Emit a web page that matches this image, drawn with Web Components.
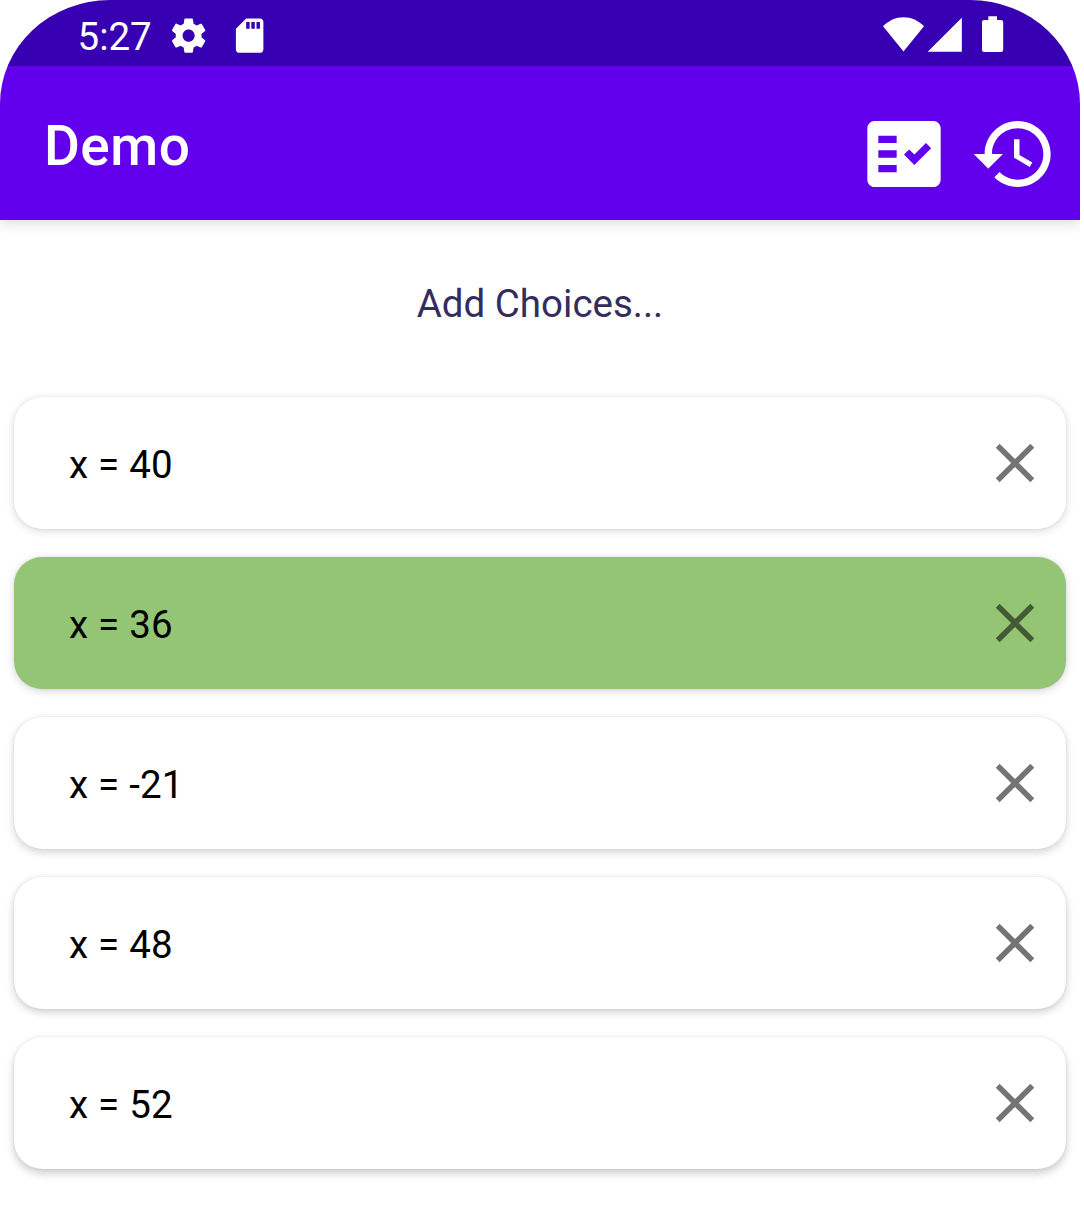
<!DOCTYPE html>
<html lang="en">
<head>
<meta charset="utf-8">
<title>Demo</title>
<style>
body { margin: 0; background: #fff; font-family: Roboto, "Liberation Sans", sans-serif; }
</style>
</head>
<body>
<demo-screen>
  <status-bar slot="top" time="5:27"></status-bar>
  <app-bar slot="top" heading="Demo"></app-bar>
  <choice-list caption="Add Choices...">
    <choice-card style="--drop:2px;--shade:.15">x = 40</choice-card>
    <choice-card selected style="--drop:2px;--shade:.17">x = 36</choice-card>
    <choice-card style="--drop:3px;--shade:.18">x = -21</choice-card>
    <choice-card style="--drop:3px;--shade:.20">x = 48</choice-card>
    <choice-card style="--drop:4px;--shade:.21">x = 52</choice-card>
  </choice-list>
</demo-screen>
<script>
function define(name, render) {
  customElements.define(name, class extends HTMLElement {
    constructor() { super(); this.attachShadow({ mode: "open" }); }
    connectedCallback() { this.shadowRoot.innerHTML = render(this); }
  });
}

define("demo-screen", () => `
<style>
:host { display: block; width: 1080px; height: 1220px; overflow: hidden; }
.top { border-radius: 110px 110px 0 0 / 104px 104px 0 0; box-shadow: 0 3px 14px rgba(0,0,0,.15);
  clip-path: inset(0 0 -30px 0 round 110px 110px 0 0 / 104px 104px 0 0); }
</style>
<div class="top"><slot name="top"></slot></div>
<slot></slot>`);

define("status-bar", el => `
<style>
:host { display: flex; justify-content: space-between; height: 66px; background: #3700b3; color: #fff; }
.group { display: flex; align-items: flex-start; }
.time { font-size: 38.5px; line-height: 45px; padding: 14px 0 0 77.5px; width: 90.3px; }
svg { display: block; fill: #fff; }
.glyph { width: 41.25px; height: 41.25px; margin-top: 14.6px; }
.card { margin-left: 19.8px; }
</style>
<div class="group">
  <span class="time">${el.getAttribute("time")}</span>
  <svg class="glyph" viewBox="0 0 24 24"><path d="M19.43 12.98c.04-.32.07-.64.07-.98s-.03-.66-.07-.98l2.11-1.65c.19-.15.24-.42.12-.64l-2-3.46c-.12-.22-.39-.3-.61-.22l-2.49 1c-.52-.4-1.08-.73-1.69-.98l-.38-2.65C14.46 2.18 14.25 2 14 2h-4c-.25 0-.46.18-.49.42l-.38 2.65c-.61.25-1.17.59-1.69.98l-2.49-1c-.23-.09-.49 0-.61.22l-2 3.46c-.13.22-.07.49.12.64l2.11 1.65c-.04.32-.07.65-.07.98s.03.66.07.98l-2.11 1.65c-.19.15-.24.42-.12.64l2 3.46c.12.22.39.3.61.22l2.49-1c.52.4 1.08.73 1.69.98l.38 2.65c.03.24.24.42.49.42h4c.25 0 .46-.18.49-.42l.38-2.65c.61-.25 1.17-.59 1.69-.98l2.49 1c.23.09.49 0 .61-.22l2-3.46c.12-.22.07-.49-.12-.64l-2.11-1.65zM12 15.5c-1.93 0-3.5-1.57-3.5-3.5s1.57-3.5 3.5-3.5 3.5 1.57 3.5 3.5-1.57 3.5-3.5 3.5z"/></svg>
  <svg class="glyph card" viewBox="0 0 24 24"><path d="M18 2h-8L4.02 8 4 20c0 1.1.9 2 2 2h12c1.1 0 2-.9 2-2V4c0-1.1-.9-2-2-2zm-6 6h-2V4h2v4zm3 0h-2V4h2v4zm3 0h-2V4h2v4z"/></svg>
</div>
<svg width="200" height="66" viewBox="880 0 200 66">
  <path d="M903.5 51.5 883 26.2C888.5 20.5 896 17.2 903.5 17.2S918.5 20.5 924 26.2Z"/>
  <path d="M961.8 17.8V51.8H927.7Z"/>
  <path d="M988.3 16.3h8.7v3.7h4a2.2 2.2 0 0 1 2.2 2.2v27.5a2.2 2.2 0 0 1-2.2 2.2h-16.800a2.2 2.2 0 0 1-2.2-2.2V22.2a2.2 2.2 0 0 1 2.2-2.2h4.1z"/>
</svg>`);

define("app-bar", el => `
<style>
:host { display: flex; justify-content: space-between; align-items: flex-start; height: 154px; box-sizing: border-box;
  padding: 44px 22px 0 44px; background: #6200ee; color: #fff; }
h1 { margin: 3px 0 0; font-size: 55px; line-height: 66px; font-weight: 500; letter-spacing: .45px; }
.actions { display: flex; gap: 22px; }
svg { display: block; width: 88px; height: 88px; fill: #fff; }
</style>
<h1>${el.getAttribute("heading")}</h1>
<div class="actions">
  <svg viewBox="0 0 24 24"><path fill-rule="evenodd" d="M20 3H4c-1.1 0-2 .9-2 2v14c0 1.1.9 2 2 2h16c1.1 0 2-.9 2-2V5c0-1.1-.9-2-2-2zM10 17H5v-2h5v2zm0-4H5v-2h5v2zm0-4H5V7h5v2zm4.82 6L12 12.16l1.41-1.41 1.41 1.42L17.99 9l1.42 1.42L14.82 15z"/></svg>
  <svg viewBox="0 0 24 24"><path d="M13 3c-4.97 0-9 4.03-9 9H1l3.89 3.89.07.14L9 12H6c0-3.87 3.13-7 7-7s7 3.13 7 7-3.13 7-7 7c-1.93 0-3.68-.79-4.94-2.06l-1.42 1.42C8.27 19.99 10.51 21 13 21c4.97 0 9-4.03 9-9s-4.03-9-9-9zm-1 5v5l4.28 2.54.72-1.21-3.5-2.08V8H12z"/></svg>
</div>`);

define("choice-list", el => `
<style>
:host { display: flex; flex-direction: column; padding: 0 14px; }
.caption { margin: 0; padding: 61px 0 71px; text-align: center; font-size: 38.5px; line-height: 45px; color: #332d5e; }
.cards { display: flex; flex-direction: column; gap: 28px; }
</style>
<p class="caption">${el.getAttribute("caption")}</p>
<div class="cards"><slot></slot></div>`);

define("choice-card", () => `
<style>
:host { display: flex; align-items: center; justify-content: space-between; height: 132px; box-sizing: border-box;
  padding: 0 18px 0 55px; border-radius: 28px; background: #fff; color: #000; font-size: 38.5px; line-height: 45px;
  letter-spacing: .2px; box-shadow: 0 var(--drop) 8px rgba(0,0,0,var(--shade)), 0 0 2px rgba(0,0,0,.1); }
:host([selected]) { background: #94c575; }
.label { padding-top: 3px; }
svg { display: block; width: 66px; height: 66px; fill: #000; opacity: .54; }
</style>
<span class="label"><slot></slot></span>
<svg viewBox="0 0 24 24"><path d="M19 6.41L17.59 5 12 10.59 6.41 5 5 6.41 10.59 12 5 17.59 6.41 19 12 13.41 17.59 19 19 17.59 13.41 12z"/></svg>`);
</script>
</body>
</html>
